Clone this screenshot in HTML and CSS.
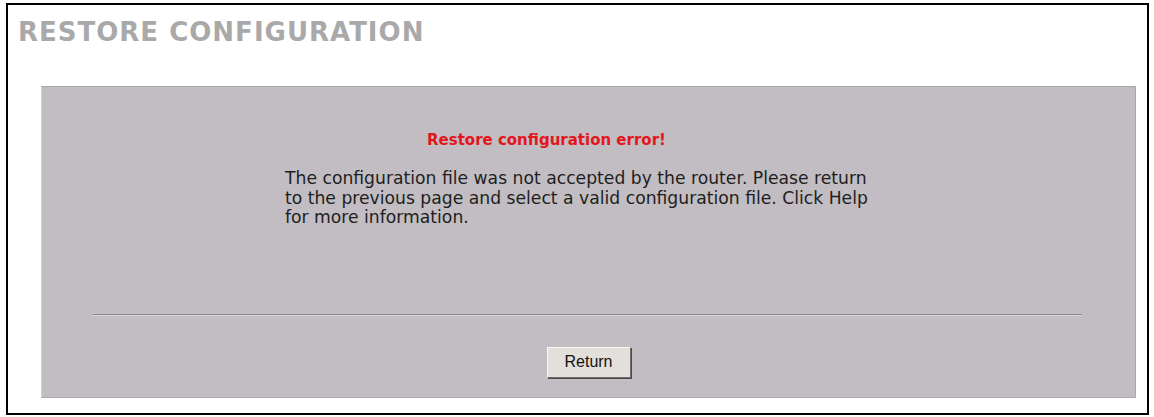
FILE: index.html
```html
<!DOCTYPE html>
<html>
<head>
<meta charset="utf-8">
<link rel="stylesheet" href="styles.css">
</head>
<body>
<div class="frame">
  <h1 class="title">RESTORE CONFIGURATION</h1>
  <div class="panel">
    <div class="message">
      <div class="error">Restore configuration error!</div>
      <p class="text">The configuration file was not accepted by the router. Please return<br>to the previous page and select a valid configuration file. Click Help<br>for more information.</p>
    </div>
    <div class="rule"></div>
    <div class="actions">
      <button class="btn" type="button">Return</button>
    </div>
  </div>
</div>
</body>
</html>
```
FILE: styles.css
```css
html, body {
  margin: 0;
  padding: 0;
  background: #ffffff;
}
.frame {
  margin: 3px 0 0 6px;
  border: 2px solid #000;
  padding: 12px 0 0 10px;
  box-sizing: border-box;
  width: 1143px;
  height: 412px;
}
.title {
  margin: 0;
  font-family: "DejaVu Sans", Verdana, sans-serif;
  font-weight: bold;
  font-size: 26px;
  line-height: 30px;
  letter-spacing: 1px;
  color: #a9a9a9;
}
.panel {
  margin: 39px 0 0 23px;
  width: 1095px;
  height: 312px;
  box-sizing: border-box;
  background: #c1bdc2;
  border: 1px solid #aaa6ab;
  border-left-color: #d2ced2;
  padding-top: 43px;
}
.message {
  margin-left: 243px;
  font-family: "DejaVu Sans", Verdana, sans-serif;
  color: #1e1e1e;
}
.error {
  margin-left: 142px;
  font-size: 15px;
  line-height: 20px;
  font-weight: bold;
  color: #e3161c;
}
.text {
  margin: 19px 0 0 0;
  font-size: 17.2px;
  line-height: 19.5px;
}
.rule {
  margin: 86px 53px 0 51px;
  height: 1px;
  background: #8b878c;
  border-bottom: 1px solid #dcd9d4;
}
.actions {
  display: flex;
  justify-content: center;
  margin-top: 31px;
}
.btn {
  width: 84px;
  height: 31px;
  padding: 0;
  font-family: "Liberation Sans", Arial, sans-serif;
  font-size: 16px;
  color: #111;
  background: #e3e0db;
  border: 1px solid;
  border-color: #f7f6f3 #6f6d6b #6f6d6b #f7f6f3;
  box-shadow: 1px 1px 0 #4a4848;
}
```
